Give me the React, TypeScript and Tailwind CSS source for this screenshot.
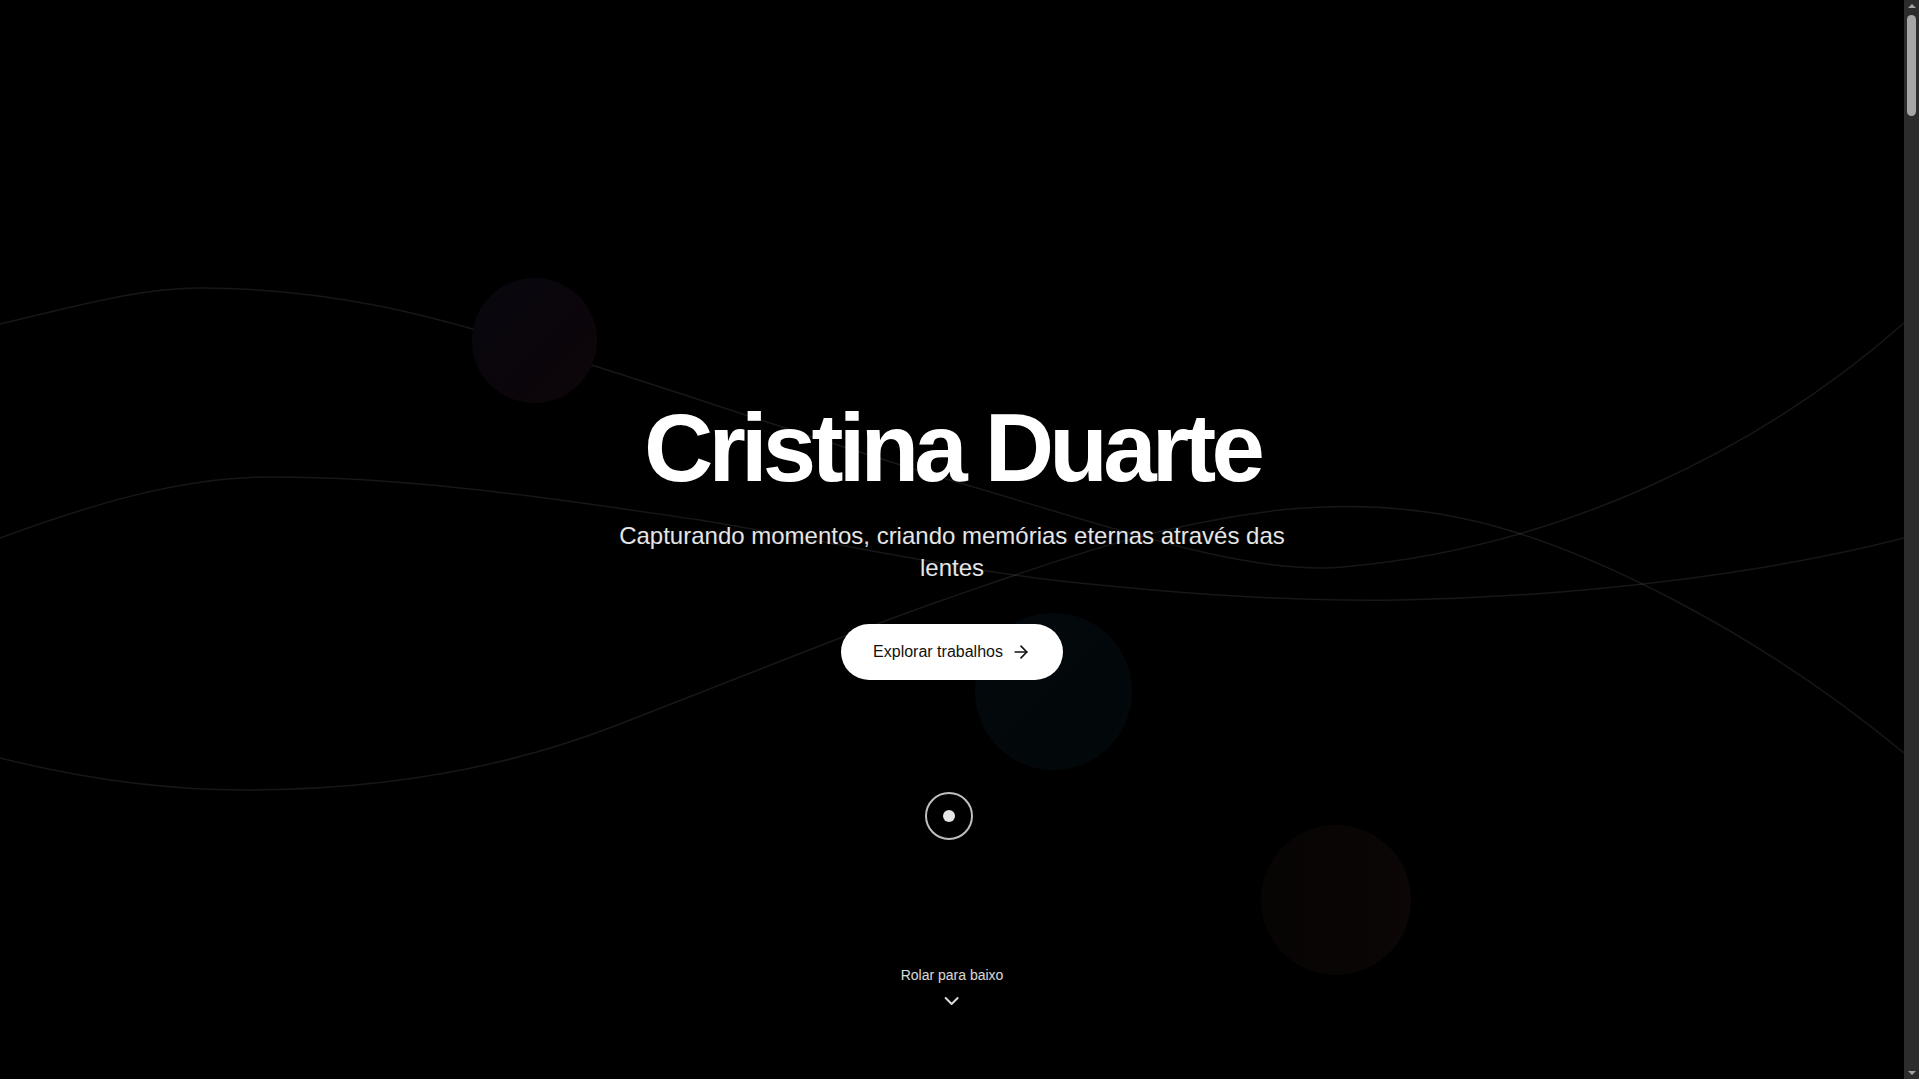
import React from 'react';
import { ArrowRight, ChevronDown } from 'lucide-react';

const Waves = () => (
  <svg className="absolute inset-0 w-full h-full" viewBox="0 0 1904 1079" preserveAspectRatio="none" fill="none">
    <path
      d="M0,324 C80,305 140,288 200,288 C330,288 430,315 534,347 C700,398 830,445 960,483 C1130,533 1250,575 1343,567 C1560,548 1760,450 1904,323"
      stroke="rgba(255,255,255,0.09)"
      strokeWidth="1.5"
    />
    <path
      d="M0,538 C90,505 180,477 270,477 C420,477 560,500 700,520 C850,545 980,575 1100,585 C1200,595 1300,602 1400,600 C1600,596 1780,570 1904,538"
      stroke="rgba(255,255,255,0.09)"
      strokeWidth="1.5"
    />
    <path
      d="M0,758 C80,778 160,790 245,790 C380,790 500,770 612,727 C740,678 850,632 943,600 C1050,563 1150,525 1280,510 C1420,495 1530,525 1674,600 C1760,645 1840,700 1904,753"
      stroke="rgba(255,255,255,0.09)"
      strokeWidth="1.5"
    />
  </svg>
);

const Hero = () => (
  <section className="relative h-screen w-full overflow-hidden flex items-center justify-center">
    <Waves />
    <div className="absolute left-[472px] top-[278px] w-[125px] h-[125px] rounded-full bg-gradient-to-br from-[#08060e] to-[#0d0509]" />
    <div className="absolute left-[975px] top-[613px] w-[157px] h-[157px] rounded-full bg-gradient-to-br from-[#03080c] to-[#02070a]" />
    <div className="absolute left-[1261px] top-[825px] w-[150px] h-[150px] rounded-full bg-gradient-to-r from-[#070404] to-[#0c0606]" />

    <div className="relative z-10 flex flex-col items-center text-center px-4">
      <h1 className="text-8xl font-bold tracking-tighter text-white mb-6">Cristina Duarte</h1>
      <p className="text-2xl text-white/90 max-w-2xl mb-10">
        Capturando momentos, criando memórias eternas através das lentes
      </p>
      <button className="flex items-center gap-2 bg-white text-[#111] px-8 py-4 rounded-full text-base">
        Explorar trabalhos
        <ArrowRight className="w-5 h-5" />
      </button>
    </div>

    <div className="absolute bottom-[66px] left-1/2 -translate-x-1/2 flex flex-col items-center gap-1 text-white/85">
      <span className="text-sm">Rolar para baixo</span>
      <ChevronDown className="w-6 h-6" />
    </div>
  </section>
);

// page scrollbar as it shows in the screenshot
const Scrollbar = () => (
  <div className="w-[15px] h-screen bg-[#2c2c2c] flex flex-col items-center pt-[4px] pb-[4px]">
    <div className="w-0 h-0 border-x-[4px] border-x-transparent border-b-[4px] border-b-[#a3a3a3]" />
    <div className="mt-[7px] w-[9px] h-[101px] rounded-full bg-[#a6a6a6]" />
    <div className="flex-1" />
    <div className="w-0 h-0 border-x-[4px] border-x-transparent border-t-[4px] border-t-[#a3a3a3]" />
  </div>
);

export default function App() {
  return (
    <div className="flex h-screen overflow-hidden bg-black font-['Liberation_Sans',Arial,sans-serif]">
      <main className="flex-1 min-w-0">
        <Hero />
      </main>
      <Scrollbar />
      <div className="pointer-events-none fixed left-[925px] top-[792px] z-50 w-12 h-12 rounded-full border-2 border-white/75 flex items-center justify-center">
        <div className="w-3 h-3 rounded-full bg-white/90" />
      </div>
    </div>
  );
}
